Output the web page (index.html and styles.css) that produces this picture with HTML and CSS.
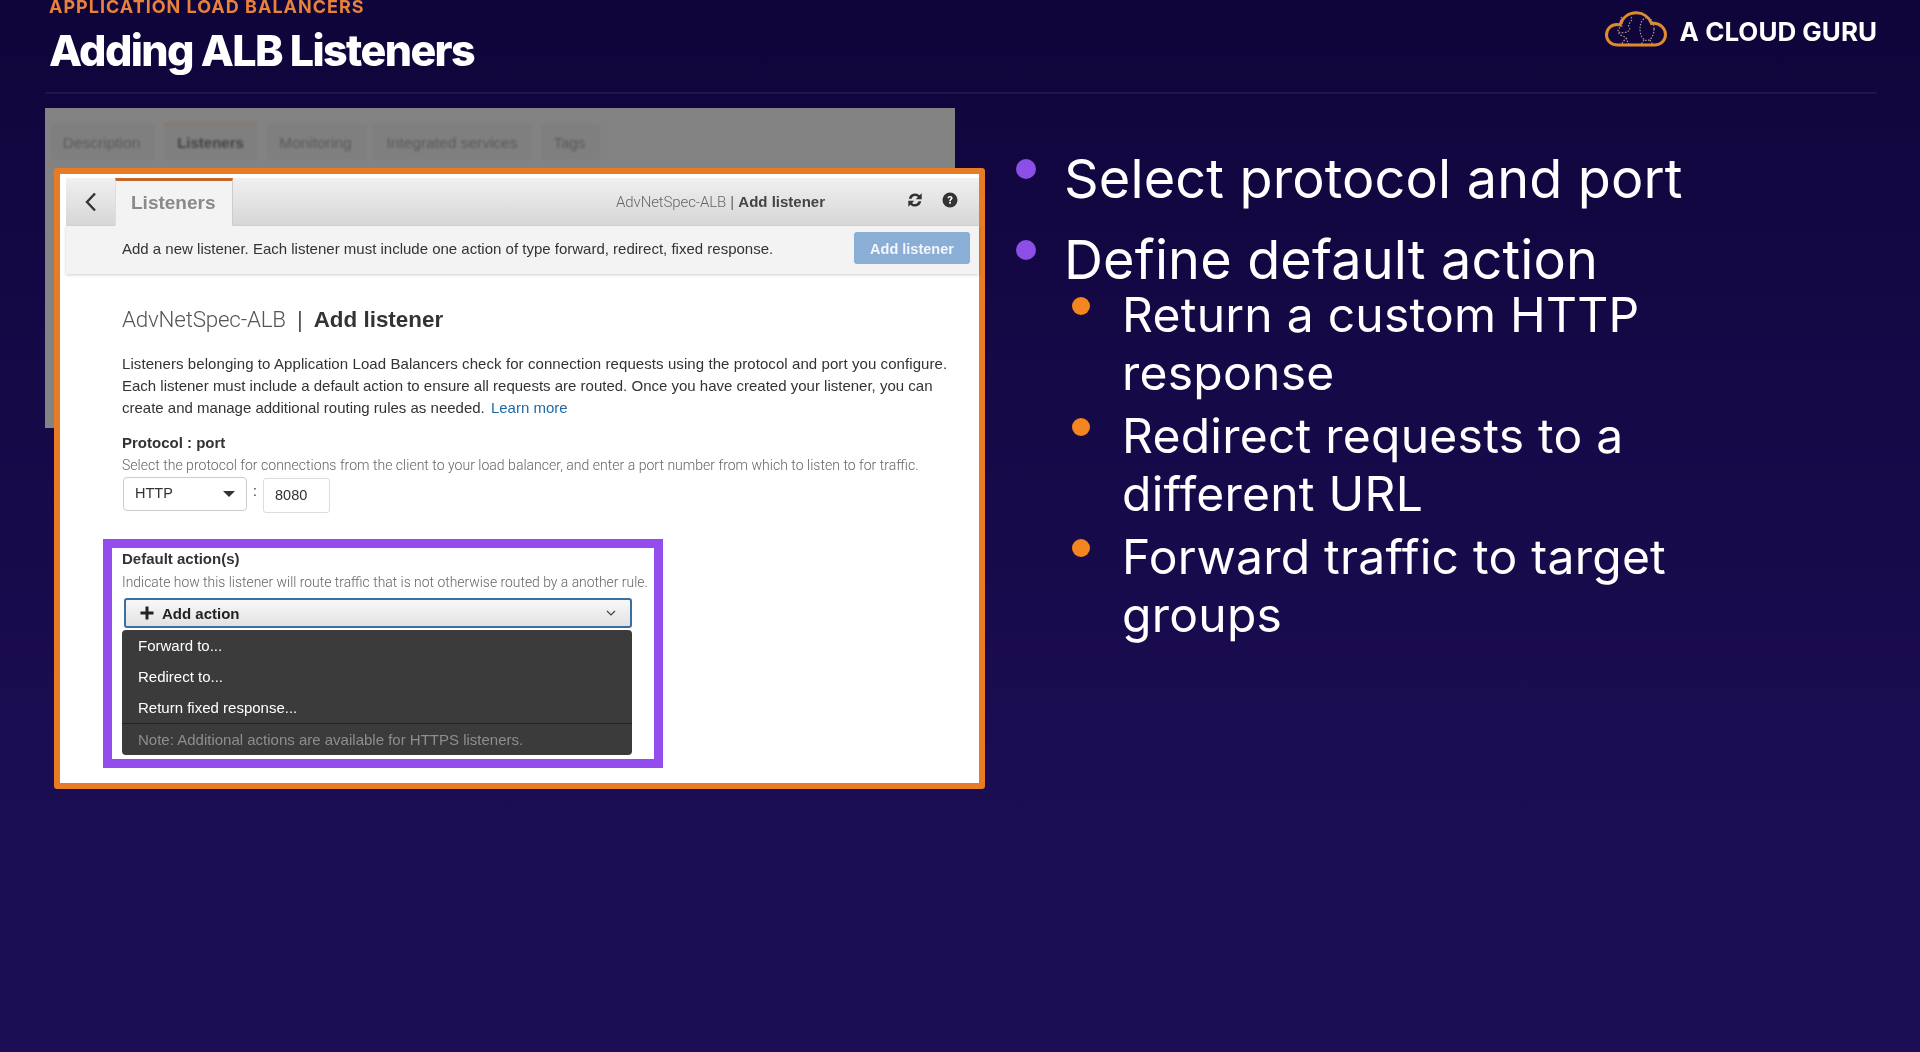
FILE: index.html
```html
<!DOCTYPE html>
<html lang="en">
<head>
<meta charset="utf-8">
<title>Adding ALB Listeners</title>
<link rel="stylesheet" href="styles.css">
</head>
<body>
<div class="slide">
  <header class="head">
    <div class="head-text">
      <div class="eyebrow">APPLICATION LOAD BALANCERS</div>
      <h1 class="title">Adding ALB Listeners</h1>
    </div>
    <div class="brand">
      <svg class="brand-cloud" viewBox="0 0 62 36" width="62" height="36" aria-hidden="true">
        <path class="cloud-line" d="M13 34C6 34 1.500 29.500 1.500 24C1.500 18 6 13.500 12 13.500C13 13.500 14 13.600 15 13.900C17.500 6.500 23.500 1.800 31 1.800C38 1.800 44 6 46.500 12.500C47.500 12.300 48.500 12.200 49.500 12.300C55.800 12.800 60.500 17.800 60.500 23.500C60.500 29.500 55.800 34 49.500 34Z"/>
        <path class="cloud-dots" d="M17 6C13 9 20 13 16 16C11 18 13 24 18 25C23 27 21 31 25 34M26 6C29 10 22 12 24 16C27 20 20 23 14 21M22 27C18 30 17 32 17 34"/>
        <ellipse class="cloud-dots" cx="42" cy="18" rx="7" ry="11.500"/>
        <path class="cloud-dots" d="M39 29L36 34M45 29L48 34"/>
      </svg>
      <span class="brand-name">A CLOUD GURU</span>
    </div>
  </header>
  <div class="rule"></div>
  <main class="main">
    <section class="shots">
      <div class="shot-back">
        <div class="back-tabs">
          <div class="back-tab back-tab-desc">Description</div>
          <div class="back-tab back-tab-active">Listeners</div>
          <div class="back-tab back-tab-mon">Monitoring</div>
          <div class="back-tab back-tab-int">Integrated services</div>
          <div class="back-tab back-tab-tags">Tags</div>
        </div>
      </div>
      <div class="panel">
        <div class="bar">
          <button class="back-btn" aria-label="Back">
            <svg viewBox="0 0 14 22" width="14" height="22" aria-hidden="true"><path d="M11 2.500L3 11L11 19.500" fill="none" stroke="#333" stroke-width="2.400"/></svg>
          </button>
          <div class="bar-tab">Listeners</div>
          <div class="crumb"><span class="crumb-light">AdvNetSpec-ALB</span> <span class="crumb-sep">|</span> <b>Add listener</b></div>
          <svg class="bar-icon refresh" viewBox="0 0 16 16" width="16" height="16" aria-hidden="true"><path d="M1.800 6.800A6.400 6.400 0 0 1 12.600 3.300L14.700 1.300V7.300H8.700L10.900 5.100A3.700 3.700 0 0 0 4.600 6.800ZM14.200 9.200A6.400 6.400 0 0 1 3.400 12.700L1.300 14.700V8.700H7.300L5.100 10.900A3.700 3.700 0 0 0 11.400 9.200Z" fill="#333"/></svg>
          <svg class="bar-icon help" viewBox="0 0 16 16" width="16" height="16" aria-hidden="true"><circle cx="8" cy="8" r="7.500" fill="#333"/><path d="M5.500 6.200C5.500 4.800 6.600 4 8 4C9.500 4 10.600 4.900 10.600 6.100C10.600 7.700 8.800 7.800 8.800 9.200H7.200C7.200 7.200 8.900 7 8.900 6.100C8.900 5.600 8.500 5.300 8 5.300C7.500 5.300 7.100 5.700 7.100 6.200Z" fill="#fff"/><rect x="7.200" y="10" width="1.700" height="1.700" fill="#fff"/></svg>
        </div>
        <div class="subbar">
          <span class="subbar-text">Add a new listener. Each listener must include one action of type forward, redirect, fixed response.</span>
          <button class="add-btn">Add listener</button>
        </div>
        <div class="content">
          <h2 class="form-title"><span class="form-light">AdvNetSpec-ALB</span><span class="form-sep">|</span><b>Add listener</b></h2>
          <p class="intro"><span class="intro-first">Listeners belonging to Application Load Balancers check for connection requests using the protocol and port you configure.</span><br>Each listener must include a default action to ensure all requests are routed. Once you have created your listener, you can<br>create and manage additional routing rules as needed. <a class="learn" href="#">Learn more</a></p>
          <div class="label">Protocol : port</div>
          <div class="hint">Select the protocol for connections from the client to your load balancer, and enter a port number from which to listen to for traffic.</div>
          <div class="proto-row">
            <div class="select">HTTP<span class="caret"></span></div>
            <span class="colon">:</span>
            <div class="port">8080</div>
          </div>
          <div class="highlight">
            <div class="label label-action">Default action(s)</div>
            <div class="hint hint-action">Indicate how this listener will route traffic that is not otherwise routed by a another rule.</div>
            <div class="action-btn">
              <svg viewBox="0 0 14 14" width="14" height="14" aria-hidden="true"><path d="M5.500 0.500H8.500V5.500H13.500V8.500H8.500V13.500H5.500V8.500H0.500V5.500H5.500Z" fill="#222"/></svg>
              <b>Add action</b>
              <svg class="chev" viewBox="0 0 10 6" width="10" height="6" aria-hidden="true"><path d="M1 1L5 5L9 1" fill="none" stroke="#444" stroke-width="1.200"/></svg>
            </div>
            <div class="menu">
              <div class="menu-item">Forward to...</div>
              <div class="menu-item">Redirect to...</div>
              <div class="menu-item">Return fixed response...</div>
              <div class="menu-note">Note: Additional actions are available for HTTPS listeners.</div>
            </div>
          </div>
        </div>
      </div>
    </section>
    <ul class="points">
      <li class="point">Select protocol and port</li>
      <li class="point">Define default action
        <ul class="subpoints">
          <li class="subpoint">Return a custom HTTP response</li>
          <li class="subpoint">Redirect requests to a different URL</li>
          <li class="subpoint">Forward traffic to target groups</li>
        </ul>
      </li>
    </ul>
  </main>
</div>
</body>
</html>
```

FILE: styles.css
```css
* { box-sizing: border-box; }
html, body { margin: 0; height: 100%; }
body { background: #150a47; overflow: hidden; }
.slide {
  height: 1052px;
  padding: 0 43px 0 45px;
  background: linear-gradient(180deg, #0f053a 0%, #140845 30%, #1b0d52 75%, #1c0e54 100%);
  font-family: Inter, "Liberation Sans", sans-serif;
  color: #fff;
  overflow: hidden;
  filter: blur(0.35px);
}
.head {
  display: flex;
  justify-content: space-between;
  height: 92px;
  padding-left: 4px;
}
.head-text { margin-top: -4px; }
.eyebrow {
  font-size: 18px;
  line-height: 22px;
  font-weight: 700;
  letter-spacing: 1px;
  color: #e8813a;
}
.title {
  margin: 6px 0 0;
  font-size: 43px;
  line-height: 53px;
  font-weight: 800;
  letter-spacing: -1.6px;
}
.brand {
  display: flex;
  align-items: flex-start;
  gap: 13px;
  padding-top: 11px;
}
.brand-cloud { display: block; }
.cloud-line { fill: none; stroke: #e08a2c; stroke-width: 3; }
.cloud-dots { fill: none; stroke: #b59a8c; stroke-width: 1.200; stroke-dasharray: 1.500 1.500; }
.brand-name {
  font-size: 26px;
  line-height: 42px;
  font-weight: 700;
  letter-spacing: 0;
}
.rule { height: 2px; background: #1f1553; border-radius: 1px; }
.main {
  display: flex;
  margin-top: 14px;
}
.shots { position: relative; flex: none; width: 971px; height: 690px; }
.shot-back {
  width: 910px;
  height: 320px;
  background: #838383;
  padding: 15px 0 0 6px;
}
.back-tabs { display: flex; gap: 9px; }
.back-tab {
  height: 37px;
  padding-top: 11px;
  background: #7f7f7f;
  font-family: "Liberation Sans", sans-serif;
  font-size: 15.500px;
  line-height: 18px;
  color: #5a5a5a;
  text-align: center;
  filter: blur(0.8px);
}
.back-tab-desc { width: 104px; padding-right: 3px; }
.back-tab-active { width: 93px; border-top: 1px solid #9a6a50; font-size: 15px; font-weight: 700; color: #444; padding-top: 10px; }
.back-tab-mon { width: 100px; margin-left: 1px; padding-right: 3px; }
.back-tab-int { width: 160px; margin-left: -4px; }
.back-tab-tags { width: 59px; padding-right: 2px; font-size: 15px; }
.panel {
  position: absolute;
  left: 9px;
  top: 60px;
  width: 931px;
  height: 621px;
  border: 6px solid #e87b26;
  border-radius: 3px;
  background: #fff;
  padding-top: 4px;
  font-family: "Liberation Sans", sans-serif;
  color: #333;
}
.bar {
  display: flex;
  align-items: center;
  height: 48px;
  margin-left: 6px;
  background: linear-gradient(180deg, #f0f0f0 0%, #d6d6d6 100%);
}
.back-btn {
  flex: none;
  width: 49px;
  height: 48px;
  padding: 0;
  border: 0;
  background: transparent;
  display: flex;
  align-items: center;
  justify-content: center;
}
.bar-tab {
  flex: none;
  width: 118px;
  height: 48px;
  border-top: 3px solid #c4682a;
  border-right: 1px solid #ccc;
  border-left: 1px solid #ddd;
  background: #f3f3f3;
  padding-left: 15px;
  font-size: 19px;
  font-weight: 700;
  line-height: 44px;
  color: #8a8a8a;
}
.crumb {
  margin-left: auto;
  font-size: 15px;
  color: #444;
}
.crumb-light { font-family: Roboto, "Liberation Sans", sans-serif; font-weight: 300; color: #666; letter-spacing: -0.12px; }
.crumb-sep { color: #666; }
.bar-icon { flex: none; display: block; margin-top: -4px; }
.refresh { margin-left: 82px; }
.help { margin-left: 19px; margin-right: 21px; }
.subbar {
  display: flex;
  align-items: center;
  justify-content: space-between;
  height: 48px;
  margin-left: 6px;
  padding: 0 9px 0 56px;
  background: #f3f3f3;
  box-shadow: 0 1px 3px rgba(0,0,0,0.2);
  font-size: 15px;
  color: #333;
}
.subbar-text { margin-top: -4px; }
.add-btn {
  flex: none;
  width: 116px;
  height: 32px;
  margin-top: -4px;
  padding: 2px 0 0;
  border: 0;
  border-radius: 3px;
  background: #8aaed6;
  color: #f3f6fa;
  font-family: inherit;
  font-size: 14.500px;
  font-weight: 700;
}
.content { padding: 31px 0 0 62px; }
.form-title {
  margin: 0;
  font-size: 22.400px;
  line-height: 28px;
  font-weight: 400;
}
.form-light { font-family: Roboto, "Liberation Sans", sans-serif; font-weight: 300; color: #555; letter-spacing: -0.2px; }
.form-sep { margin: 0 11px; color: #555; }
.intro {
  margin: 19px 0 0;
  font-size: 15px;
  line-height: 22px;
  color: #333;
}
.intro-first { letter-spacing: 0.08px; }
.learn { color: #1f6aa5; text-decoration: none; margin-left: 2px; }
.label {
  margin-top: 14px;
  font-size: 15px;
  line-height: 20px;
  font-weight: 700;
  color: #333;
}
.hint {
  margin-top: 2px;
  font-family: Roboto, "Liberation Sans", sans-serif;
  font-weight: 300;
  font-size: 14.050px;
  line-height: 20px;
  color: #666;
}
.proto-row {
  display: flex;
  align-items: flex-start;
  margin: 2px 0 0 1px;
}
.select {
  position: relative;
  width: 124px;
  height: 34px;
  border: 1px solid #ccc;
  border-radius: 4px;
  padding-left: 11px;
  font-size: 14.500px;
  line-height: 30px;
  color: #333;
}
.caret {
  position: absolute;
  right: 11px;
  top: 13px;
  border-left: 6px solid transparent;
  border-right: 6px solid transparent;
  border-top: 6px solid #333;
}
.colon { width: 16px; text-align: center; font-size: 14px; line-height: 28px; }
.port {
  width: 67px;
  height: 35px;
  margin-top: 1px;
  border: 1px solid #ddd;
  border-radius: 3px;
  padding-left: 11px;
  font-size: 14.500px;
  line-height: 33px;
  color: #333;
}
.highlight {
  width: 560px;
  height: 229px;
  margin: 26px 0 0 -19px;
  border: 9px solid #944dec;
  padding-left: 10px;
}
.label-action { margin-top: 2px; line-height: 18px; }
.hint-action { margin-top: 4px; font-size: 13.900px; white-space: nowrap; }
.action-btn {
  display: flex;
  align-items: center;
  gap: 8px;
  width: 508px;
  height: 30px;
  margin: 6px 0 0 2px;
  padding: 0 14px;
  border: 2px solid #3a6ea5;
  border-radius: 3px;
  background: linear-gradient(180deg, #f8f8f8, #e2e2e2);
  font-size: 15px;
  color: #222;
}
.chev { margin-left: auto; margin-right: 0; }
.menu {
  width: 510px;
  margin-top: 2px;
  background: #3b3b3b;
  border-radius: 4px;
  font-size: 15px;
  color: #fff;
}
.menu-item { height: 31px; padding-left: 16px; line-height: 31px; }
.menu-note {
  height: 32px;
  border-top: 1px solid #252525;
  padding-left: 16px;
  line-height: 32px;
  color: #8e8e8e;
}
.points {
  flex: 1;
  list-style: none;
  margin: 0;
  padding: 38px 0 0 48px;
  max-width: 760px;
}
.point {
  position: relative;
  font-size: 54px;
  line-height: 66px;
  margin-bottom: 15px;
  letter-spacing: 0.15px;
}
.point::before {
  content: "";
  position: absolute;
  left: -48px;
  top: 13px;
  width: 20px;
  height: 20px;
  border-radius: 50%;
  background: #8b4fe8;
}
.subpoints { list-style: none; margin: -7px 0 0; padding: 0 0 0 58px; }
.subpoint {
  position: relative;
  font-size: 48px;
  line-height: 58px;
  margin-bottom: 5px;
  letter-spacing: 0.25px;
}
.subpoint::before {
  content: "";
  position: absolute;
  left: -50px;
  top: 11px;
  width: 18px;
  height: 18px;
  border-radius: 50%;
  background: #f5851f;
}
```
